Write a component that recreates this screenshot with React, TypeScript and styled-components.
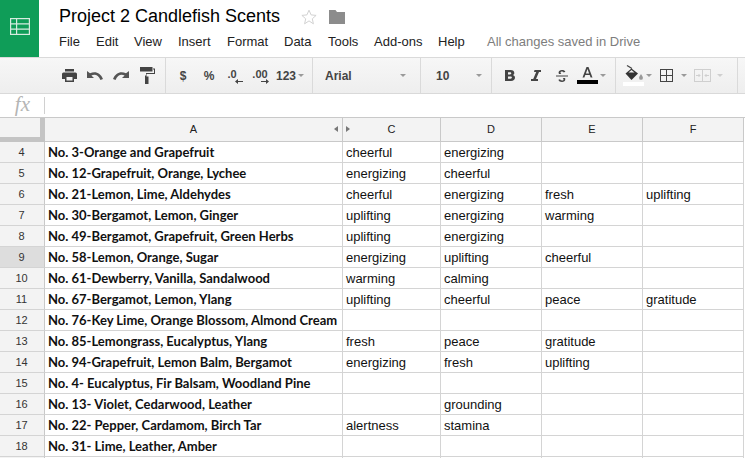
import React from "react"
import styled, { createGlobalStyle } from "styled-components"

const GlobalStyle = createGlobalStyle`
  html, body {
    margin: 0;
    padding: 0;
    background: #ffffff;
    overflow: hidden;
  }
`

const Page = styled.div`
  width: 745px;
  height: 458px;
  overflow: hidden;
  font-family: "Liberation Sans", Arial, sans-serif;
  color: #000;
`

const Header = styled.div`
  display: flex;
  height: 57px;
`

const Logo = styled.div`
  width: 39px;
  height: 57px;
  box-sizing: border-box;
  padding-bottom: 5px;
  background: #0f9d58;
  display: flex;
  align-items: center;
  justify-content: center;
`

const HeaderText = styled.div`
  padding-left: 20px;
`

const TitleRow = styled.div`
  display: flex;
  align-items: center;
  height: 33px;
`

const Title = styled.div`
  font-size: 18px;
  width: 242px;
  line-height: 33px;
`

const FolderWrap = styled.div`
  margin-left: 12px;
  display: flex;
`

const Menu = styled.div`
  display: flex;
  font-size: 13px;
  line-height: 17px;
`

const MenuItem = styled.span<{ $w: number }>`
  width: ${(p) => p.$w}px;
  color: #222;
`

const Saved = styled.span`
  color: #7d7d7d;
`

const Toolbar = styled.div`
  display: flex;
  height: 35px;
  border-top: 1px solid #dadada;
  border-bottom: 1px solid #d9d9d9;
  background: linear-gradient(#f7f7f7, #eeeeee);
`

const Group = styled.div<{ $w: number; $pad?: number }>`
  width: ${(p) => p.$w}px;
  box-sizing: border-box;
  border-right: 1px solid #dadada;
  display: flex;
  align-items: center;
  padding-left: ${(p) => p.$pad || 0}px;
  color: #444;
  font-size: 12px;
  font-weight: bold;
`

const Slot = styled.div<{ $w: number }>`
  width: ${(p) => p.$w}px;
  flex: none;
  display: flex;
  align-items: center;
  justify-content: center;
  height: 35px;
`

const DecimalSlot = styled(Slot)`
  flex-direction: column;
  font-size: 11px;
  line-height: 10px;
  padding-top: 2px;
  box-sizing: border-box;
`

const DecimalText = styled.span<{ $shift: number }>`
  margin-right: ${(p) => p.$shift}px;
`

const DecimalArrow = styled.svg<{ $shift: number }>`
  margin-left: ${(p) => p.$shift}px;
`

const Caret = styled.span<{ $ml?: number; $light?: boolean }>`
  width: 0;
  height: 0;
  flex: none;
  margin-left: ${(p) => p.$ml || 0}px;
  border-left: 3.5px solid transparent;
  border-right: 3.5px solid transparent;
  border-top: 3.5px solid ${(p) => (p.$light ? "#cfcfcf" : "#9a9a9a")};
`

const FormulaBar = styled.div`
  display: flex;
  align-items: center;
  height: 23px;
`

const Fx = styled.div`
  width: 45px;
  box-sizing: border-box;
  height: 17px;
  border-right: 1px solid #d0d0d0;
  font-family: "Liberation Serif", serif;
  font-style: italic;
  font-size: 21px;
  line-height: 15px;
  color: #b5b5b5;
  text-align: right;
  padding-right: 14px;
`

const Grid = styled.div`
  display: grid;
  grid-template-columns: 45px 298px 98px 101px 101px 101px;
  grid-template-rows: 24px;
  grid-auto-rows: 21px;
  border-top: 1px solid #c9c9c9;
`

const Corner = styled.div`
  box-sizing: border-box;
  background: #f3f3f3;
  border-right: 5px solid #c4c4c4;
  border-bottom: 5px solid #c4c4c4;
`

const ColHead = styled.div`
  box-sizing: border-box;
  background: #f3f3f3;
  border-right: 1px solid #c9c9c9;
  border-bottom: 1px solid #c9c9c9;
  font-size: 11px;
  line-height: 23px;
  text-align: center;
  color: #222;
  position: relative;
`

const HideArrow = styled.span<{ $dir: "left" | "right" }>`
  position: absolute;
  top: 8px;
  width: 0;
  height: 0;
  border-top: 3.5px solid transparent;
  border-bottom: 3.5px solid transparent;
  ${(p) =>
    p.$dir === "left"
      ? "right: 4px; border-right: 4px solid #777;"
      : "left: 3px; border-left: 4px solid #777;"}
`

const RowHead = styled.div<{ $active?: boolean }>`
  box-sizing: border-box;
  background: ${(p) => (p.$active ? "#dddddd" : "#f3f3f3")};
  border-right: 1px solid #c9c9c9;
  border-bottom: 1px solid #d4d4d4;
  font-size: 11px;
  line-height: 21px;
  text-align: center;
  color: #333;
  padding-right: 1px;
`

const Cell = styled.div<{ $bold?: boolean }>`
  box-sizing: border-box;
  border-right: 1px solid #d4d4d4;
  border-bottom: 1px solid #d4d4d4;
  padding-left: 3px;
  white-space: nowrap;
  line-height: ${(p) => (p.$bold ? "20px" : "22px")};
  font-size: 13px;
  font-family: ${(p) =>
    p.$bold ? '"Lato", sans-serif' : '"Liberation Sans", sans-serif'};
  font-weight: ${(p) => (p.$bold ? 700 : 400)};
  color: #111;
`

const rows: [number | "", string, string, string, string, string][] = [
  [4, "No. 3-Orange and Grapefruit", "cheerful", "energizing", "", ""],
  [5, "No. 12-Grapefruit, Orange, Lychee", "energizing", "cheerful", "", ""],
  [6, "No. 21-Lemon, Lime, Aldehydes", "cheerful", "energizing", "fresh", "uplifting"],
  [7, "No. 30-Bergamot, Lemon, Ginger", "uplifting", "energizing", "warming", ""],
  [8, "No. 49-Bergamot, Grapefruit, Green Herbs", "uplifting", "energizing", "", ""],
  [9, "No. 58-Lemon, Orange, Sugar", "energizing", "uplifting", "cheerful", ""],
  [10, "No. 61-Dewberry, Vanilla, Sandalwood", "warming", "calming", "", ""],
  [11, "No. 67-Bergamot, Lemon, Ylang", "uplifting", "cheerful", "peace", "gratitude"],
  [12, "No. 76-Key Lime, Orange Blossom, Almond Cream", "", "", "", ""],
  [13, "No. 85-Lemongrass, Eucalyptus, Ylang", "fresh", "peace", "gratitude", ""],
  [14, "No. 94-Grapefruit, Lemon Balm, Bergamot", "energizing", "fresh", "uplifting", ""],
  [15, "No. 4- Eucalyptus, Fir Balsam, Woodland Pine", "", "", "", ""],
  [16, "No. 13- Violet, Cedarwood, Leather", "", "grounding", "", ""],
  [17, "No. 22- Pepper, Cardamom, Birch Tar", "alertness", "stamina", "", ""],
  [18, "No. 31- Lime, Leather, Amber", "", "", "", ""],
  ["", "", "", "", "", ""],
]

const menu: [string, number][] = [
  ["File", 37],
  ["Edit", 38],
  ["View", 44],
  ["Insert", 49],
  ["Format", 57],
  ["Data", 44],
  ["Tools", 46],
  ["Add-ons", 64],
  ["Help", 49],
]

const SheetIcon = () => (
  <svg width="20" height="17" viewBox="0 0 20 17" fill="none" stroke="#d6ecdf" strokeWidth="1.2">
    <rect x="0.6" y="0.6" width="18.8" height="15.8" />
    <path d="M0.6 5.8h18.8M0.6 11.2h18.8M6.6 0.6v15.8" />
  </svg>
)

const App = () => {
  return (
    <Page>
      <GlobalStyle />
      <Header>
        <Logo>
          <SheetIcon />
        </Logo>
        <HeaderText>
          <TitleRow>
            <Title>Project 2 Candlefish Scents</Title>
            <svg width="16" height="16" viewBox="0 0 16 16" fill="none" stroke="#d2d2d2" strokeWidth="1">
              <path d="M8 1.2l2.100 4.700 5 .5-3.800 3.400 1.100 5L8 11.900l-4.400 2.900 1.100-5L.9 6.400l5-.5z" />
            </svg>
            <FolderWrap>
              <svg width="16" height="14" viewBox="0 0 16 14" fill="#8c8c8c">
                <path d="M0 0h6.500l1.500 2H16v12H0z" />
              </svg>
            </FolderWrap>
          </TitleRow>
          <Menu>
            {menu.map(([name, w]) => (
              <MenuItem key={name} $w={w}>
                {name}
              </MenuItem>
            ))}
            <Saved>All changes saved in Drive</Saved>
          </Menu>
        </HeaderText>
      </Header>

      <Toolbar>
        <Group $w={166} $pad={56}>
          <Slot $w={26}>
            <svg width="15" height="13" viewBox="0 0 15 13" fill="#444">
              <path d="M3 0h9v2.500H3zM1.500 3.500h12A1.500 1.500 0 0 1 15 5v5h-3v3H3v-3H0V5a1.500 1.500 0 0 1 1.500-1.500zM4.500 8v3.500h6V8z" />
            </svg>
          </Slot>
          <Slot $w={26}>
            <svg width="16" height="9" viewBox="0 0 16 9" fill="#555">
              <path d="M0 0v7h7L4.400 4.500C7.500 2.800 11.500 3.600 13.500 9L16 8C13.500 1.500 8 -.2 3 2.300z" />
            </svg>
          </Slot>
          <Slot $w={26}>
            <svg width="16" height="9" viewBox="0 0 16 9" fill="#555">
              <path d="M16 0v7H9l2.600-2.500C8.500 2.800 4.500 3.600 2.500 9L0 8C2.500 1.500 8 -.2 13 2.300z" />
            </svg>
          </Slot>
          <Slot $w={26}>
            <svg width="15" height="17" viewBox="0 0 15 17" fill="#444">
              <path d="M0 0h12.500v4.500H0zM13 1.500h2V7H6.500v2.500H8.500V17H5V8.500H6V6h8V2.500h-1z" />
            </svg>
          </Slot>
        </Group>
        <Group $w={147} $pad={4}>
          <Slot $w={26}>$</Slot>
          <Slot $w={26}>%</Slot>
          <DecimalSlot $w={26}>
            <DecimalText $shift={6}>.0</DecimalText>
            <DecimalArrow $shift={8} width="8" height="5" viewBox="0 0 8 5" fill="#444">
              <path d="M0 2.500L3 0v2h5v1H3v2z" />
            </DecimalArrow>
          </DecimalSlot>
          <DecimalSlot $w={28}>
            <DecimalText $shift={4}>.00</DecimalText>
            <DecimalArrow $shift={6} width="8" height="5" viewBox="0 0 8 5" fill="#444">
              <path d="M8 2.500L5 0v2H0v1h5v2z" />
            </DecimalArrow>
          </DecimalSlot>
          <span>123</span>
          <Caret $ml={2} />
        </Group>
        <Group $w={108} $pad={12}>
          <span>Arial</span>
          <Caret $ml={48} />
        </Group>
        <Group $w={71} $pad={15}>
          <span>10</span>
          <Caret $ml={27} />
        </Group>
        <Group $w={124} $pad={5}>
          <Slot $w={26}>
            <svg width="10" height="11" viewBox="0 0 10 11" fill="#444">
              <path d="M0 0h5.500C8 0 9.300 1.200 9.300 2.900c0 1-.5 1.800-1.400 2.200C9.200 5.500 10 6.500 10 7.800 10 9.800 8.500 11 6 11H0zM3 2.200v2.200h2c.8 0 1.300-.4 1.300-1.100S5.800 2.200 5 2.200zM3 6.400v2.400h2.500c.9 0 1.400-.5 1.400-1.200s-.5-1.200-1.400-1.200z" />
            </svg>
          </Slot>
          <Slot $w={26}>
            <svg width="10" height="11" viewBox="0 0 10 11" fill="#444">
              <path d="M3.500 0H10v2H8L5 9h2v2H0V9h2.200L5.200 2H3z" />
            </svg>
          </Slot>
          <Slot $w={26}>
            <svg width="12" height="12" viewBox="0 0 12 12" fill="#444">
              <path d="M0 5.500h12v1H0zM3 4c-.3-.5-.4-1-.4-1.400C2.600 1 4 0 6 0c1.700 0 2.900.6 3.400 1.800l-1.700.7C7.400 1.900 6.800 1.600 6 1.600c-.9 0-1.500.4-1.500 1 0 .5.300.9.800 1.400zM9 8c.2.400.3.800.3 1.200C9.300 11 8 12 6 12c-1.800 0-3.200-.8-3.600-2.200l1.700-.6c.3.800 1 1.200 1.900 1.200 1 0 1.500-.4 1.500-1 0-.5-.2-1-.7-1.400z" />
            </svg>
          </Slot>
          <Slot $w={24}>
            <svg width="21" height="21" viewBox="0 0 21 21" fill="#444">
              <path d="M9.500 2h2l4 10.500h-1.900l-.9-2.500H8.300l-.9 2.500H5.500zM8.900 8.500h3.200L10.500 4z" />
              <rect x="0" y="15" width="21" height="4" fill="#000" />
            </svg>
          </Slot>
          <Caret $ml={1} />
        </Group>
        <Group $w={122} $pad={5}>
          <Slot $w={24}>
            <svg width="21" height="21" viewBox="0 0 21 21" fill="#333">
              <path d="M4 .5l5 3" fill="none" stroke="#444" strokeWidth="1.2" />
              <path d="M2.500 8.500L8.500 3.500l6.500 5-6.500 6.500z" />
              <path d="M5.500 7.500L8.500 5l3 2.500z" fill="#eee" />
              <path d="M18 9c1.200 1.700 1.900 2.900 1.900 3.900a1.900 1.900 0 0 1-3.800 0c0-1 .7-2.200 1.900-3.900z" fill="#999" />
              <rect x="0" y="17" width="21" height="4" fill="#fff" />
            </svg>
          </Slot>
          <Caret $ml={1} />
          <Slot $w={29}>
            <svg width="13" height="13" viewBox="0 0 13 13" fill="none" stroke="#444" strokeWidth="1">
              <rect x="0.500" y="0.500" width="12" height="12" />
              <path d="M6.500 0.500v12M0.500 6.500h12" />
            </svg>
          </Slot>
          <Caret />
          <Slot $w={30}>
            <svg width="17" height="13" viewBox="0 0 17 13" fill="none" stroke="#cfcfcf" strokeWidth="1">
              <rect x="0.500" y="0.500" width="16" height="12" />
              <path d="M8.500 0.500v12M2 6.500h4M4.500 5l1.500 1.500L4.500 8M15 6.500h-4M12.500 5L11 6.500 12.500 8" />
            </svg>
          </Slot>
          <Caret $light />
        </Group>
      </Toolbar>

      <FormulaBar>
        <Fx>fx</Fx>
      </FormulaBar>

      <Grid>
        <Corner />
        <ColHead>
          A
          <HideArrow $dir="left" />
        </ColHead>
        <ColHead>
          C
          <HideArrow $dir="right" />
        </ColHead>
        <ColHead>D</ColHead>
        <ColHead>E</ColHead>
        <ColHead>F</ColHead>
        {rows.map(([n, a, c, d, e, f], i) => (
          <React.Fragment key={i}>
            <RowHead $active={n === 9}>{n}</RowHead>
            <Cell $bold>{a}</Cell>
            <Cell>{c}</Cell>
            <Cell>{d}</Cell>
            <Cell>{e}</Cell>
            <Cell>{f}</Cell>
          </React.Fragment>
        ))}
      </Grid>
    </Page>
  )
}

export default App
